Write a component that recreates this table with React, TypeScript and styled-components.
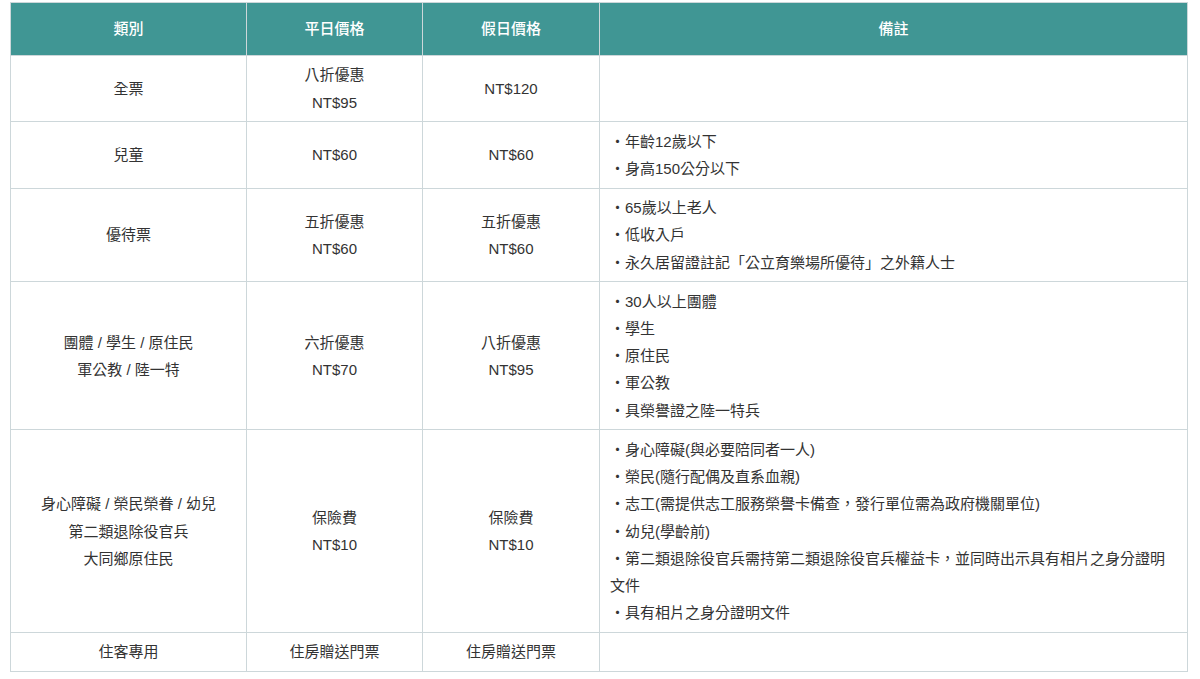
import React from "react";
import styled, { createGlobalStyle } from "styled-components";

const Global = createGlobalStyle`
  html, body { margin: 0; padding: 0; background: #ffffff; }
  body { font-family: "Liberation Sans", "Noto Sans CJK TC", sans-serif; }
`;

const Page = styled.div`
  padding: 2px 0 0 10px;
`;

const Table = styled.table`
  width: 1177px;
  table-layout: fixed;
  border-collapse: collapse;
  border: 1px solid #cdd7da;
  font-family: "Liberation Sans", "Noto Sans CJK TC", sans-serif;
  font-size: 15px;
  line-height: 27.2px;
  color: #333333;
`;

const HeadCell = styled.th`
  background: #409694;
  color: #ffffff;
  font-weight: 500;
  padding: 12.4px 10px;
  text-align: center;
  border: 1px solid #cdd7da;
  border-top: none;
  border-bottom: 1px solid #cdd7da;
`;

const Cell = styled.td<{ $note?: boolean }>`
  padding: 5.5px 10px;
  border: 1px solid #cdd7da;
  text-align: ${(p) => (p.$note ? "left" : "center")};
  vertical-align: middle;
  word-break: break-all;
`;

const Line = styled.div<{ $single?: boolean }>`
  ${(p) => (p.$single ? "height: 27.2px; overflow: hidden; white-space: nowrap;" : "")}
`;

type Row = { cat: string[]; weekday: string[]; holiday: string[]; notes: string[] };

const rows: Row[] = [
  { cat: ["全票"], weekday: ["八折優惠", "NT$95"], holiday: ["NT$120"], notes: [] },
  { cat: ["兒童"], weekday: ["NT$60"], holiday: ["NT$60"], notes: ["・年齡12歲以下", "・身高150公分以下"] },
  {
    cat: ["優待票"],
    weekday: ["五折優惠", "NT$60"],
    holiday: ["五折優惠", "NT$60"],
    notes: ["・65歲以上老人", "・低收入戶", "・永久居留證註記「公立育樂場所優待」之外籍人士"],
  },
  {
    cat: ["團體 / 學生 / 原住民", "軍公教 / 陸一特"],
    weekday: ["六折優惠", "NT$70"],
    holiday: ["八折優惠", "NT$95"],
    notes: ["・30人以上團體", "・學生", "・原住民", "・軍公教", "・具榮譽證之陸一特兵"],
  },
  {
    cat: ["身心障礙 / 榮民榮眷 / 幼兒", "第二類退除役官兵", "大同鄉原住民"],
    weekday: ["保險費", "NT$10"],
    holiday: ["保險費", "NT$10"],
    notes: [
      "・身心障礙(與必要陪同者一人)",
      "・榮民(隨行配偶及直系血親)",
      "・志工(需提供志工服務榮譽卡備查，發行單位需為政府機關單位)",
      "・幼兒(學齡前)",
      "・第二類退除役官兵需持第二類退除役官兵權益卡，並同時出示具有相片之身分證明文件",
      "・具有相片之身分證明文件",
    ],
  },
  { cat: ["住客專用"], weekday: ["住房贈送門票"], holiday: ["住房贈送門票"], notes: [] },
];

const Lines = ({ items, single }: { items: string[]; single?: boolean }) => (
  <>
    {items.map((t, i) => (
      <Line key={i} $single={single}>
        {t}
      </Line>
    ))}
  </>
);

export default function App() {
  return (
    <>
      <Global />
      <Page>
        <Table>
          <colgroup>
            <col style={{ width: 236 }} />
            <col style={{ width: 176 }} />
            <col style={{ width: 177 }} />
            <col style={{ width: 588 }} />
          </colgroup>
          <thead>
            <tr>
              <HeadCell>類別</HeadCell>
              <HeadCell>平日價格</HeadCell>
              <HeadCell>假日價格</HeadCell>
              <HeadCell>備註</HeadCell>
            </tr>
          </thead>
          <tbody>
            {rows.map((r, i) => (
              <tr key={i}>
                <Cell><Lines items={r.cat} single /></Cell>
                <Cell><Lines items={r.weekday} single /></Cell>
                <Cell><Lines items={r.holiday} single /></Cell>
                <Cell $note>
                  {r.notes.length ? <Lines items={r.notes} /> : <Line $single>&nbsp;</Line>}
                </Cell>
              </tr>
            ))}
          </tbody>
        </Table>
      </Page>
    </>
  );
}
